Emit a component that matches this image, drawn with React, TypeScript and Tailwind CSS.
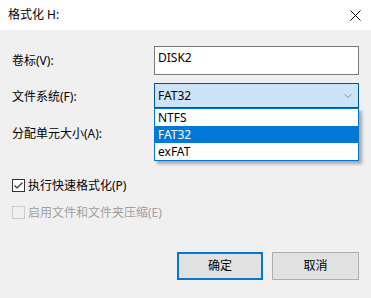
import { ChevronDown } from 'lucide-react';

const font = { fontFamily: '"Noto Sans", "Noto Sans CJK SC", sans-serif' };

function Checkbox({ checked, disabled, label }: { checked?: boolean; disabled?: boolean; label: string }) {
  return (
    <div className="flex items-center h-[13px]">
      <div
        className={`w-[13px] h-[13px] border flex items-center justify-center ${
          disabled ? 'border-[#cccccc] bg-[#f0f0f0]' : 'border-[#333333] bg-white'
        }`}
      >
        {checked && (
          <svg width="11" height="11" viewBox="0 0 11 11" fill="none">
            <path d="M1.5 5.5 L4 8 L9.5 2.5" stroke="#333333" strokeWidth="1.2" />
          </svg>
        )}
      </div>
      <span className={`ml-[3px] text-[12px] leading-[13px] ${disabled ? 'text-[#a0a0a0]' : 'text-black'}`}>
        {label}
      </span>
    </div>
  );
}

export default function App() {
  const options = ['NTFS', 'FAT32', 'exFAT'];

  return (
    <div className="w-[371px] h-[298px] bg-[#f0f0f0] text-black overflow-hidden" style={font}>
      {/* Title bar */}
      <div className="h-[30px] bg-white flex items-center justify-between pl-[8px] pr-[10px]">
        <span className="text-[12px] leading-none">格式化 H:</span>
        <svg width="11" height="11" viewBox="0 0 11 11" fill="none">
          <path d="M0.5 0.5 L10.5 10.5 M10.5 0.5 L0.5 10.5" stroke="#000000" strokeWidth="1" />
        </svg>
      </div>

      <div className="pl-[12px] pr-[12px] pt-[16px]">
        {/* Volume label */}
        <div className="flex items-center h-[29px]">
          <span className="w-[142px] text-[12px]">卷标(V):</span>
          <div className="w-[205px] h-[29px] bg-white border border-[#7a7a7a] px-[3px] pt-[3px] text-[12px] leading-[16px]">
            DISK2
          </div>
        </div>

        {/* File system */}
        <div className="flex items-center h-[25px] mt-[8px]">
          <span className="w-[142px] text-[12px] pt-[3px]">文件系统(F):</span>
          <div className="relative w-[205px]">
            <div className="h-[25px] bg-[#cce4f7] border border-[#005499] flex items-center justify-between pl-[3px] pr-[4px] text-[12px]">
              <span>FAT32</span>
              <ChevronDown size={12} strokeWidth={1.3} className="text-[#5f5f5f]" />
            </div>
            <div className="absolute left-0 top-[25px] w-[205px] bg-white border border-[#0078d7] shadow-[3px_3px_3px_rgba(0,0,0,0.3)] z-10">
              {options.map(o => (
                <div
                  key={o}
                  className={`h-[17px] pl-[3px] text-[12px] leading-[17px] ${
                    o === 'FAT32' ? 'bg-[#0078d7] text-white' : 'text-black'
                  }`}
                >
                  {o}
                </div>
              ))}
            </div>
          </div>
        </div>

        {/* Allocation unit size */}
        <div className="flex items-center h-[25px] mt-[13px]">
          <span className="w-[142px] text-[12px]">分配单元大小(A):</span>
        </div>

        <div className="mt-[33px]">
          <Checkbox checked label="执行快速格式化(P)" />
        </div>
        <div className="mt-[14px]">
          <Checkbox disabled label="启用文件和文件夹压缩(E)" />
        </div>

        {/* Buttons */}
        <div className="flex justify-end gap-[9px] mt-[33px]">
          <button className="w-[86px] h-[28px] bg-[#e1e1e1] border-2 border-[#0078d7] text-[12px]">确定</button>
          <button className="w-[87px] h-[28px] bg-[#e1e1e1] border border-[#adadad] text-[12px]">取消</button>
        </div>
      </div>
    </div>
  );
}
